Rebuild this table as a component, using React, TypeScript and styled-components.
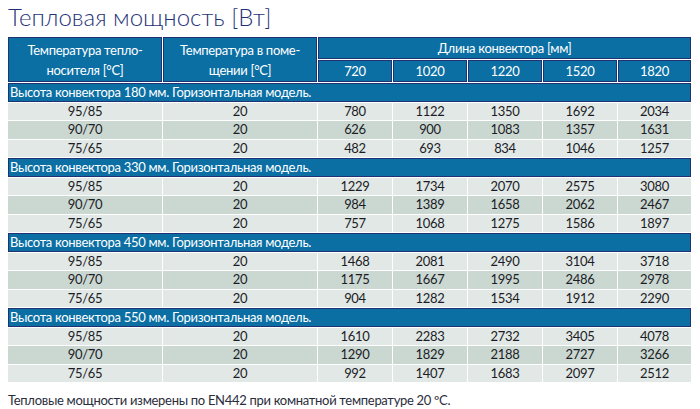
import React from 'react';
import styled, { createGlobalStyle } from 'styled-components';

const Global = createGlobalStyle`
  html, body { margin: 0; padding: 0; background: #ffffff; }
  body { font-family: Lato, "Open Sans", "Liberation Sans", sans-serif; }
`;

const Page = styled.div`
  width: 700px;
  height: 409px;
  box-sizing: border-box;
  padding: 0 8px;
  overflow: hidden;
`;

const Title = styled.h1`
  margin: 0;
  height: 36px;
  font-weight: 300;
  font-size: 24px;
  line-height: 34px;
  color: #1f3378;
  white-space: nowrap;
`;

const Table = styled.table`
  border-collapse: separate;
  border-spacing: 1px;
  margin: 0 -1px;
  width: 685px;
  table-layout: fixed;
  font-size: 13px;
  letter-spacing: -0.3px;
`;

const Col = styled.col<{ $w: number }>`
  width: ${(p) => p.$w}px;
`;

const HeadCell = styled.th<{ $h: number }>`
  background: #0b6fa4;
  border: 1px solid #1f3273;
  color: #ffffff;
  font-weight: 400;
  text-align: center;
  padding: 0;
  height: ${(p) => p.$h}px;
  line-height: 20px;
  box-sizing: border-box;
`;

const GroupCell = styled.td`
  background: #0b6fa4;
  border: 1px solid #1f3273;
  color: #ffffff;
  text-align: left;
  padding: 0 0 0 1px;
  height: 19px;
  line-height: 17px;
  box-sizing: border-box;
  white-space: nowrap;
`;

const DataCell = styled.td<{ $dark: boolean }>`
  background: ${(p) => (p.$dark ? '#cbd8d2' : '#e1e8e5')};
  color: #1c1c26;
  text-align: center;
  padding: 0;
  height: 17.33px;
  line-height: 17px;
`;

const Note = styled.p`
  margin: 8px 0 0;
  font-size: 13px;
  letter-spacing: -0.3px;
  line-height: 18px;
  color: #2b2d3a;
  white-space: nowrap;
`;

const colWidths = [154, 154, 74, 74, 74, 74, 73];
const lengths = [720, 1020, 1220, 1520, 1820];

const groups = [
  {
    h: 180,
    rows: [
      ['95/85', [780, 1122, 1350, 1692, 2034]],
      ['90/70', [626, 900, 1083, 1357, 1631]],
      ['75/65', [482, 693, 834, 1046, 1257]],
    ],
  },
  {
    h: 330,
    rows: [
      ['95/85', [1229, 1734, 2070, 2575, 3080]],
      ['90/70', [984, 1389, 1658, 2062, 2467]],
      ['75/65', [757, 1068, 1275, 1586, 1897]],
    ],
  },
  {
    h: 450,
    rows: [
      ['95/85', [1468, 2081, 2490, 3104, 3718]],
      ['90/70', [1175, 1667, 1995, 2486, 2978]],
      ['75/65', [904, 1282, 1534, 1912, 2290]],
    ],
  },
  {
    h: 550,
    rows: [
      ['95/85', [1610, 2283, 2732, 3405, 4078]],
      ['90/70', [1290, 1829, 2188, 2727, 3266]],
      ['75/65', [992, 1407, 1683, 2097, 2512]],
    ],
  },
] as { h: number; rows: [string, number[]][] }[];

export default function App() {
  return (
    <Page>
      <Global />
      <Title>Тепловая мощность [Вт]</Title>
      <Table>
        <colgroup>
          {colWidths.map((w, i) => (
            <Col $w={w} key={i} />
          ))}
        </colgroup>
        <thead>
          <tr>
            <HeadCell $h={42} rowSpan={2}>
              Температура тепло-
              <br />
              носителя [°C]
            </HeadCell>
            <HeadCell $h={42} rowSpan={2}>
              Температура в поме-
              <br />
              щении [°C]
            </HeadCell>
            <HeadCell $h={21} colSpan={5}>
              Длина конвектора [мм]
            </HeadCell>
          </tr>
          <tr>
            {lengths.map((l) => (
              <HeadCell $h={20} key={l}>
                {l}
              </HeadCell>
            ))}
          </tr>
        </thead>
        <tbody>
          {groups.map((g) => (
            <React.Fragment key={g.h}>
              <tr>
                <GroupCell colSpan={7}>
                  Высота конвектора {g.h} мм. Горизонтальная модель.
                </GroupCell>
              </tr>
              {g.rows.map(([t, vals], i) => (
                <tr key={t}>
                  <DataCell $dark={i === 1}>{t}</DataCell>
                  <DataCell $dark={i === 1}>20</DataCell>
                  {vals.map((v, j) => (
                    <DataCell $dark={i === 1} key={j}>
                      {v}
                    </DataCell>
                  ))}
                </tr>
              ))}
            </React.Fragment>
          ))}
        </tbody>
      </Table>
      <Note>Тепловые мощности измерены по EN442 при комнатной температуре 20 ºС.</Note>
    </Page>
  );
}
